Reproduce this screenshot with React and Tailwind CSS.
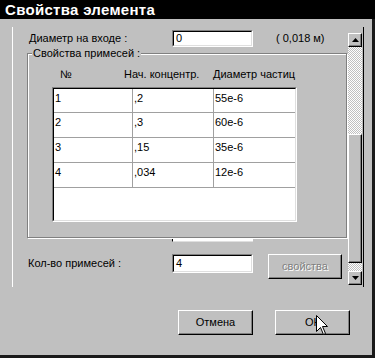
import React from "react";

function Btn({ children, className = "", disabled = false }) {
  return (
    <div
      className={
        "flex items-center justify-center border-t border-l border-white border-r border-b border-r-black border-b-black shadow-[inset_-1px_-1px_0_#808080] " +
        className
      }
    >
      <span className={disabled ? "text-[#808080] [text-shadow:1px_1px_0_#fff]" : ""}>{children}</span>
    </div>
  );
}

function Edit({ value, className = "" }) {
  return (
    <div className={"border-t border-l border-[#808080] border-b border-r border-b-white border-r-white " + className}>
      <div className="h-full border-t border-l border-black border-b border-r border-b-[#dfdfdf] border-r-[#dfdfdf] bg-white pl-[2px] leading-[13px] flex items-center">
        {value}
      </div>
    </div>
  );
}

function ScrollArrow({ up }) {
  return (
    <div className="h-[14px] w-[14px] bg-[#c0c0c0] border-t border-l border-white border-r border-b border-r-black border-b-black shadow-[inset_-1px_-1px_0_#808080] flex items-center justify-center">
      <svg width="7" height="4" viewBox="0 0 7 4">
        {up ? <polygon points="3.5,0 7,4 0,4" fill="#000" /> : <polygon points="0,0 7,0 3.5,4" fill="#000" />}
      </svg>
    </div>
  );
}

const rows = [
  ["1", ",2", "55e-6"],
  ["2", ",3", "60e-6"],
  ["3", ",15", "35e-6"],
  ["4", ",034", "12e-6"],
];

export default function App() {
  const checker =
    "bg-[repeating-conic-gradient(#c0c0c0_0%_25%,#ffffff_0%_50%)] bg-[length:2px_2px]";
  return (
    <div className="w-[375px] h-[358px] bg-[#c0c0c0] relative overflow-hidden font-['Liberation_Sans',Arial,sans-serif] text-[11px] leading-[13px] text-black">
      <div className="h-[19px] bg-black text-white font-bold text-[15px] leading-[19px] pl-[5px] tracking-[0.3px]">
        Свойства элемента
      </div>
      <div className="h-[339px] border-r-[3px] border-b-[3px] border-r-[#1a1a1a] border-b-[#1a1a1a] flex flex-col">
        {/* scroll panel */}
        <div className="ml-[12px] mt-[8px] w-[352px] h-[260px] border-l border-white border-r border-r-black flex">
          <div className="w-[335px] flex flex-col">
            {/* diameter row */}
            <div className="mt-[3px] h-[17px] flex items-center">
              <div className="ml-[16px] w-[143px]">Диаметр на входе :</div>
              <Edit value="0" className="w-[81px] h-[17px]" />
              <div className="ml-[23px]">( 0,018 м)</div>
            </div>
            {/* group box */}
            <div className="relative ml-[14px] mt-[6px] w-[320px] h-[185px] border border-[#808080] shadow-[inset_1px_1px_0_#fff,1px_1px_0_#fff]">
              <div className="absolute left-[4px] top-[-7px] bg-[#c0c0c0] px-[1px]">Свойства примесей :</div>
              <div className="mt-[14px] flex h-[13px]">
                <div className="ml-[32px] w-[64px]">№</div>
                <div className="w-[89px]">Нач. концентр.</div>
                <div>Диаметр частиц</div>
              </div>
              <div className="ml-[24px] mt-[6px] w-[245px] h-[135px] border-t border-l border-[#808080] border-b border-r border-b-white border-r-white">
                <div className="h-full border-t border-l border-black border-b border-r border-b-[#dfdfdf] border-r-[#dfdfdf] bg-white">
                  {rows.map((r, i) => (
                    <div key={i} className={"flex border-b border-[#a0a0a0] " + (i === 0 ? "h-[24px]" : "h-[25px]")}>
                      <div className="w-[79px] border-r border-[#a0a0a0] pl-[1px] pt-[3px]">{r[0]}</div>
                      <div className="w-[81px] border-r border-[#a0a0a0] pl-[1px] pt-[3px]">{r[1]}</div>
                      <div className="flex-1 pl-[1px] pt-[3px]">{r[2]}</div>
                    </div>
                  ))}
                </div>
              </div>
            </div>
            {/* partially hidden edit */}
            <div className="ml-[159px] mt-[1px] w-[81px] h-[3px] bg-white border-l border-black border-b border-b-[#dfdfdf]"></div>
            {/* count row */}
            <div className="mt-[12px] flex items-start">
              <div className="ml-[15px] w-[144px] mt-[3px]">Кол-во примесей :</div>
              <Edit value="4" className="w-[81px] h-[19px]" />
              <Btn disabled className="ml-[15px] w-[74px] h-[25px]">свойства</Btn>
            </div>
          </div>
          {/* scrollbar */}
          <div className="w-[14px] pt-[6px] flex flex-col">
            <ScrollArrow up />
            <div className={"h-[87px] " + checker}></div>
            <div className="h-[129px] bg-[#c0c0c0] border-t border-l border-white border-r border-b border-r-black border-b-black shadow-[inset_-1px_-1px_0_#808080]"></div>
            <div className={"h-[8px] " + checker}></div>
            <ScrollArrow />
          </div>
        </div>
        {/* buttons */}
        <div className="mt-[23px] flex justify-end gap-[22px] pr-[22px]">
          <Btn className="w-[75px] h-[25px]">Отмена</Btn>
          <Btn className="w-[75px] h-[25px]">ОК</Btn>
        </div>
      </div>
      {/* mouse cursor */}
      <svg className="absolute left-[316px] top-[315px]" width="13" height="22" viewBox="0 0 13 22">
        <path d="M0.5 0.5 L0.5 16.5 L4.5 12.5 L7.5 19.5 L9.5 18.5 L6.5 11.5 L11.5 11.5 Z" fill="#fff" stroke="#000" strokeWidth="1" />
      </svg>
    </div>
  );
}
